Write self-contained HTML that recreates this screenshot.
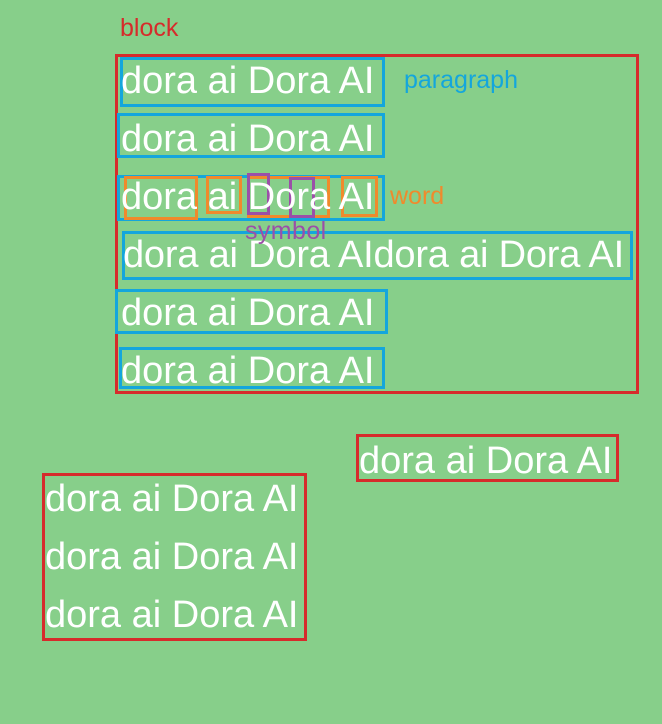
<!DOCTYPE html>
<html><head><meta charset="utf-8"><style>
html,body{margin:0;padding:0}
body{width:662px;height:724px;background:#87cf8a;position:relative;overflow:hidden;font-family:"Liberation Sans",sans-serif}
.t{position:absolute;color:#fff;font-size:38px;line-height:37px;white-space:nowrap}
.b{position:absolute;box-sizing:border-box}
.r{border:3px solid #d62b2b}
.bl{border:3px solid #14a6dc}
.o{border:3px solid #f08a2c}
.p{border:3px solid #9b4fa8}
.l{position:absolute;font-size:25px;line-height:25px;white-space:nowrap}
</style></head><body>
<div class="l" style="left:120px;top:16px;color:#d62b2b">block</div>
<div class="l" style="left:404px;top:68px;color:#14a6dc">paragraph</div>
<div class="l" style="left:390px;top:184px;color:#f08a2c">word</div>

<div class="b r" style="left:115px;top:54px;width:524px;height:340px"></div>
<div class="b bl" style="left:120px;top:57px;width:265px;height:50px"></div>
<div class="b bl" style="left:117px;top:113px;width:268px;height:45px"></div>
<div class="b bl" style="left:117px;top:175px;width:268px;height:46px"></div>
<div class="b bl" style="left:122px;top:231px;width:511px;height:49px"></div>
<div class="b bl" style="left:115px;top:289px;width:273px;height:45px"></div>
<div class="b bl" style="left:119px;top:347px;width:266px;height:42px"></div>

<div class="b o" style="left:124px;top:176px;width:74px;height:44px"></div>
<div class="b o" style="left:206px;top:176px;width:36px;height:38px"></div>
<div class="b o" style="left:247px;top:176px;width:83px;height:42px"></div>
<div class="b o" style="left:341px;top:176px;width:37px;height:41px"></div>
<div class="b p" style="left:247px;top:173px;width:23px;height:42px"></div>
<div class="b p" style="left:289px;top:177px;width:26px;height:41px"></div>

<div class="t" style="left:121px;top:63px">dora ai Dora AI</div>
<div class="t" style="left:121px;top:121px">dora ai Dora AI</div>
<div class="t" style="left:121px;top:179px">dora ai Dora AI</div>
<div class="t" style="left:123px;top:237px;letter-spacing:-0.2px">dora ai Dora AIdora ai Dora AI</div>
<div class="t" style="left:121px;top:295px">dora ai Dora AI</div>
<div class="t" style="left:121px;top:353px">dora ai Dora AI</div>
<div class="l" style="left:245px;top:219px;color:#9b4fa8;letter-spacing:0.4px">symbol</div>

<div class="b r" style="left:356px;top:434px;width:263px;height:48px"></div>
<div class="t" style="left:359px;top:443px">dora ai Dora AI</div>

<div class="b r" style="left:42px;top:473px;width:265px;height:168px"></div>
<div class="t" style="left:45px;top:481px">dora ai Dora AI</div>
<div class="t" style="left:45px;top:539px">dora ai Dora AI</div>
<div class="t" style="left:45px;top:597px">dora ai Dora AI</div>
</body></html>
